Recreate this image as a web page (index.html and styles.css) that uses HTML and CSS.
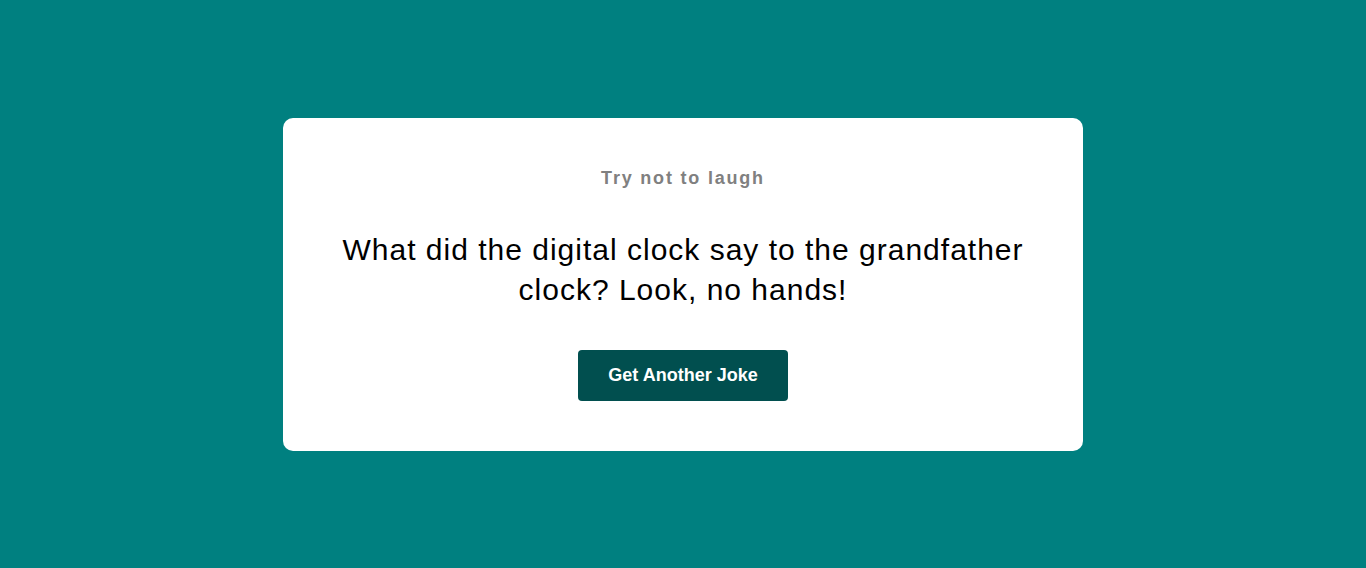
FILE: index.html
```html
<!DOCTYPE html>
<html lang="en">
<head>
<meta charset="UTF-8">
<title>Joke Generator</title>
<link rel="stylesheet" href="styles.css">
</head>
<body>
<main class="card">
  <h3 class="subtitle">Try not to laugh</h3>
  <p class="joke">What did the digital clock say to the grandfather clock? Look, no hands!</p>
  <button class="btn" type="button">Get Another Joke</button>
</main>
</body>
</html>
```
FILE: styles.css
```css
* { box-sizing: border-box; }
html, body { margin: 0; padding: 0; }
body {
  background: #008080;
  height: 100vh;
  display: flex;
  align-items: center;
  justify-content: center;
  font-family: "Liberation Sans", Arial, sans-serif;
}
.card {
  width: 800px;
  background: #ffffff;
  border-radius: 10px;
  padding: 50px 40px;
  text-align: center;
  display: flex;
  flex-direction: column;
  align-items: center;
}
.subtitle {
  margin: 0;
  font-size: 18px;
  line-height: 21px;
  font-weight: bold;
  color: #808080;
  letter-spacing: 0.1em;
}
.joke {
  margin: 41px 0 40px;
  font-size: 30px;
  line-height: 40px;
  letter-spacing: 1px;
  color: #000000;
}
.btn {
  background: #014f4f;
  color: #ffffff;
  border: none;
  border-radius: 4px;
  padding: 15px 30px;
  font-family: "Liberation Sans", Arial, sans-serif;
  font-size: 18px;
  line-height: 21px;
  font-weight: bold;
  cursor: pointer;
}
```
